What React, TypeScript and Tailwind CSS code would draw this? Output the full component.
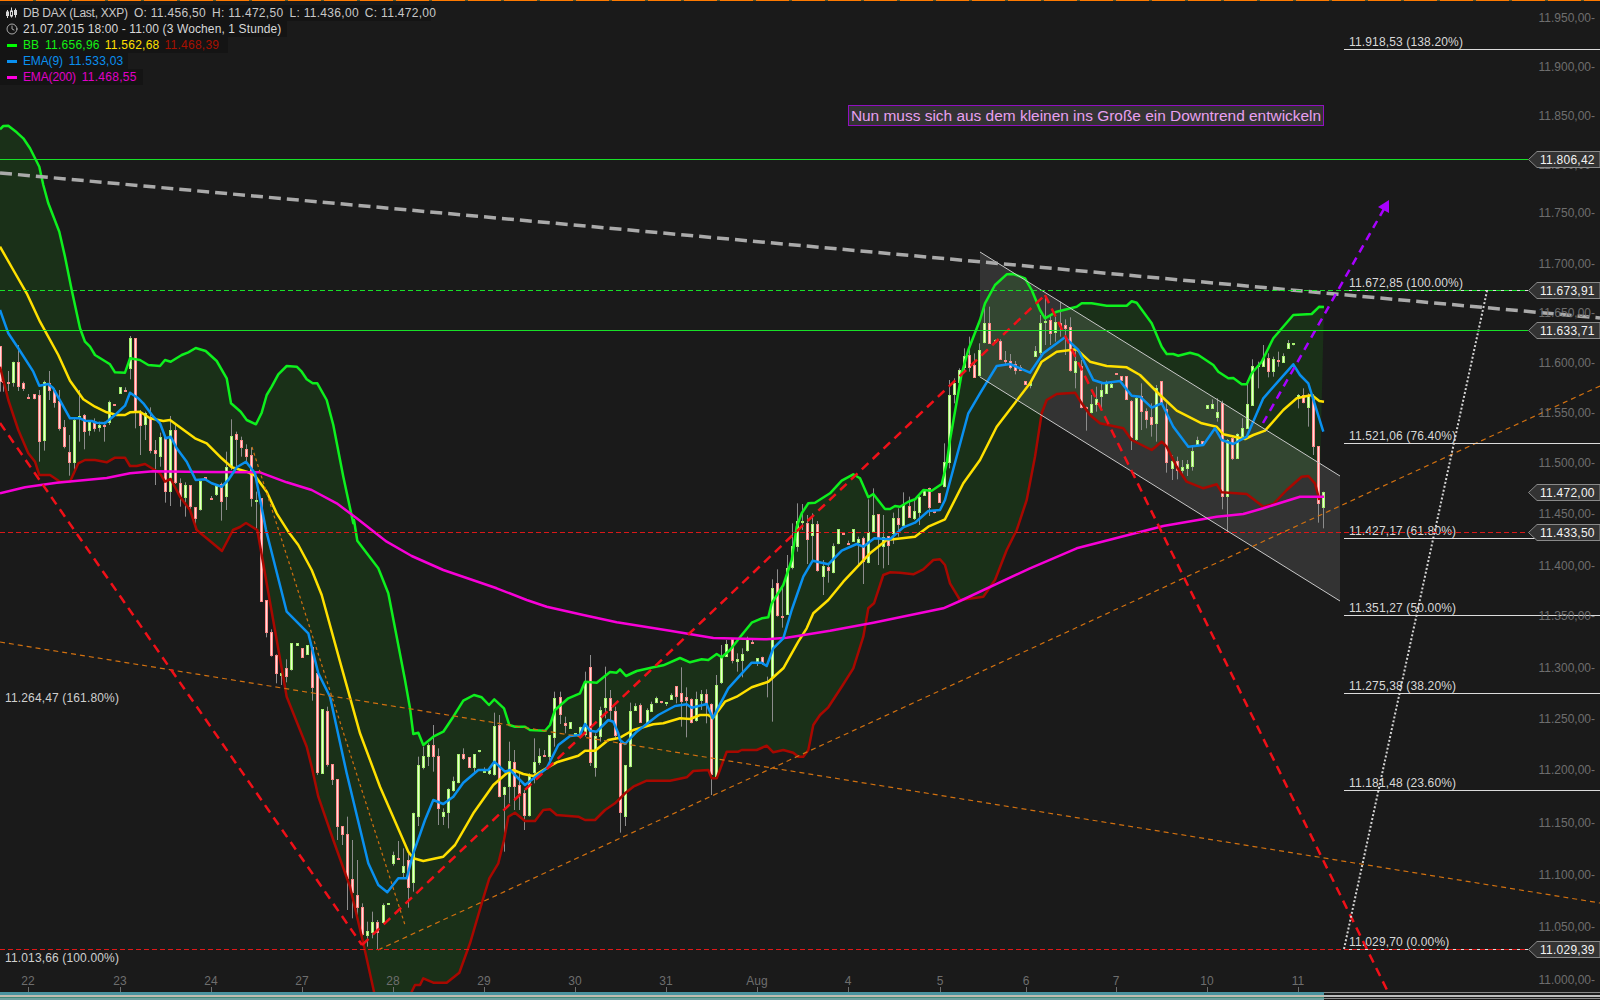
import { Clock } from 'lucide-react';

type Pt = [number, number];
type Candle = [number, number, number, number, number, number];

// readings were taken from 3x crops, so each block carries its crop origin
const crop = (ox: number, oy: number, pts: Pt[]): Pt[] => pts.map(([x, y]) => [ox + x / 3, oy + y / 3]);
const cropCandles = (ox: number, oy: number, rows: Candle[]): Candle[] =>
    rows.map(([x, wt, bt, bb, wb, up]) => [ox + x / 3, oy + wt / 3, oy + bt / 3, oy + bb / 3, oy + wb / 3, up]);

const upperBand: Pt[] = [
    ...crop(0, 110, [[0, 58], [10, 48], [25, 47], [50, 67], [70, 85], [90, 115], [118, 170], [130, 225], [145, 280], [178, 365], [195, 440], [215, 540], [240, 655], [255, 695], [270, 710], [285, 735], [330, 763], [345, 787], [375, 788], [390, 745], [420, 750], [445, 765], [480, 768], [495, 750], [512, 755], [545, 735], [565, 727], [587, 714], [617, 723], [650, 753], [680, 805], [693, 880], [722, 905], [740, 930], [768, 943], [785, 908], [800, 855], [815, 830], [835, 793], [860, 768], [890, 770], [905, 785], [920, 808], [938, 820], [952, 820], [980, 870], [1000, 945], [1030, 1100], [1060, 1240]]),
    ...crop(250, 520, [[312, 0], [322, 62], [385, 145], [415, 220], [440, 350], [465, 480], [480, 565], [490, 642], [505, 638], [520, 675], [550, 650], [580, 635], [610, 590], [640, 542], [672, 525], [695, 532], [717, 555], [733, 538], [762, 565], [778, 615], [795, 620], [825, 620], [840, 630], [885, 632], [900, 615], [915, 570], [955, 535], [990, 520], [1005, 485], [1040, 488], [1080, 456], [1100, 458]]),
    ...crop(620, 440, [[0, 688], [18, 708], [50, 693], [100, 682], [130, 676], [180, 654], [210, 667], [245, 658], [265, 660], [290, 642], [305, 652], [330, 630], [365, 585], [395, 548], [425, 535], [445, 532], [455, 490], [490, 435], [515, 360], [530, 260], [545, 220], [565, 190], [585, 188], [630, 160], [665, 122], [700, 103], [720, 115], [745, 172], [760, 162], [795, 207], [810, 207], [825, 198], [840, 200], [865, 185], [885, 178], [910, 150], [935, 152], [965, 132], [980, 70]]),
    ...crop(900, 240, [[150, 600], [185, 400], [205, 330], [240, 240], [255, 190], [285, 135], [320, 103], [340, 102], [375, 115], [395, 150], [420, 210], [435, 235], [470, 215], [530, 200], [545, 190], [575, 190], [620, 197], [680, 197], [695, 184], [710, 188], [755, 250], [785, 320], [800, 342], [820, 342], [835, 347], [870, 338], [895, 345], [940, 375], [955, 395], [985, 415], [1000, 414], [1025, 433], [1040, 433], [1055, 400], [1085, 365], [1120, 295], [1180, 225], [1235, 222], [1258, 200], [1272, 201]]),
];

const lowerBand: Pt[] = [
    ...crop(0, 110, [[0, 770], [25, 870], [55, 960], [85, 1030], [105, 1055], [118, 1095], [150, 1095], [180, 1115], [210, 1115], [235, 1060], [255, 1050], [285, 1050], [320, 1057], [345, 1043], [375, 1043], [390, 1068], [410, 1068], [435, 1062], [480, 1090], [495, 1115], [512, 1107], [540, 1160], [570, 1200], [590, 1260]]),
    [210, 541], [222, 551], [233, 530], [240, 527], [246, 523],
    ...crop(250, 520, [[22, 30], [110, 530], [170, 680], [185, 740], [205, 830], [250, 960], [300, 1100], [340, 1270], [372, 1415], [372, 1440], [485, 1440], [485, 1415], [495, 1395], [510, 1395], [520, 1375], [550, 1388], [590, 1388], [628, 1358], [660, 1270], [695, 1150], [718, 1075], [745, 1030], [762, 960], [775, 890], [795, 878], [825, 903], [855, 903], [880, 870], [900, 868], [920, 885], [985, 890], [1005, 900], [1035, 900], [1065, 870], [1095, 850]]),
    ...crop(620, 440, [[15, 1060], [40, 1040], [80, 1022], [150, 1022], [200, 1012], [220, 993], [265, 990], [275, 1015], [290, 1015], [320, 935], [355, 935], [365, 930], [410, 930], [440, 917], [460, 937], [490, 930], [520, 938], [535, 950], [550, 950], [565, 930], [580, 855], [600, 825], [625, 802], [665, 740], [700, 685], [730, 590], [745, 505], [762, 490], [790, 405], [810, 397]]),
    ...crop(900, 240, [[0, 998], [40, 1003], [70, 988], [100, 960], [120, 958], [135, 975], [150, 1030], [180, 1080], [250, 1070], [285, 1020], [320, 930], [350, 870], [380, 780], [405, 650], [425, 520], [440, 480], [470, 462], [525, 458], [545, 490], [570, 525], [600, 550], [670, 565], [695, 600], [755, 630], [785, 605], [800, 620], [830, 680], [860, 725], [910, 745], [950, 733], [965, 757], [1040, 762], [1090, 800], [1120, 792], [1160, 750], [1205, 710], [1225, 708], [1245, 730], [1258, 780]]),
];

const midBand: Pt[] = [
    ...crop(0, 110, [[0, 410], [40, 480], [80, 550], [120, 635], [175, 735], [210, 812], [250, 868], [285, 890], [320, 907], [350, 915], [375, 915], [390, 907], [420, 905], [450, 925], [490, 933], [510, 930], [585, 985], [620, 1000], [665, 1045], [695, 1072], [740, 1085], [765, 1097], [800, 1145], [830, 1210]]),
    ...crop(250, 520, [[115, 35], [145, 75], [185, 150], [215, 225], [270, 425], [330, 640], [390, 800], [475, 995], [490, 1015], [520, 1023], [580, 1010], [615, 975], [670, 880], [730, 795], [770, 760], [790, 750], [820, 762], [850, 768], [880, 750], [920, 727], [985, 707], [1005, 692], [1035, 692], [1075, 660]]),
    ...crop(620, 440, [[0, 893], [40, 870], [100, 853], [130, 850], [180, 835], [210, 837], [240, 825], [265, 825], [278, 835], [315, 785], [350, 770], [395, 742], [445, 725], [490, 685], [535, 605], [560, 565], [580, 520], [625, 480], [670, 425], [750, 340], [800, 300], [885, 290], [925, 260], [975, 238]]),
    ...crop(900, 240, [[190, 730], [240, 660], [290, 560], [390, 430], [425, 365], [470, 335], [530, 328], [570, 365], [620, 378], [680, 382], [720, 405], [780, 465], [830, 512], [905, 550], [950, 560], [970, 583], [1035, 597], [1060, 585], [1095, 572], [1150, 510], [1190, 475], [1235, 465], [1258, 483], [1272, 485]]),
];

const ema9: Pt[] = [
    ...crop(0, 110, [[0, 600], [25, 670], [55, 715], [100, 785], [118, 827], [145, 822], [160, 835], [210, 925], [240, 925], [255, 932], [275, 933], [290, 938], [315, 940], [345, 915], [375, 887], [390, 848], [415, 865], [430, 880], [460, 920], [480, 940], [497, 985], [512, 980], [530, 1015], [560, 1055], [587, 1110], [615, 1108], [635, 1120], [665, 1130], [685, 1110], [710, 1072], [738, 1055], [765, 1090]]),
    ...crop(250, 520, [[48, 30], [110, 275], [175, 340], [205, 460], [240, 530], [290, 760], [355, 1030], [385, 1095], [412, 1117], [445, 1075], [470, 1075], [490, 1000], [525, 900], [550, 840], [580, 852], [610, 830], [640, 788], [685, 750], [715, 750], [733, 725], [765, 755], [780, 750], [825, 795], [890, 745], [925, 675], [960, 648], [990, 645], [1005, 612], [1020, 632], [1040, 635], [1075, 600], [1090, 605], [1105, 640]]),
    ...crop(620, 440, [[0, 900], [15, 912], [50, 875], [115, 825], [165, 798], [200, 793], [215, 803], [260, 792], [278, 835], [325, 745], [395, 668], [425, 668], [440, 678], [460, 625], [490, 595], [515, 510], [550, 410], [578, 362], [625, 373], [665, 332], [710, 312], [730, 320], [763, 295], [810, 298], [850, 262], [885, 248], [925, 213], [960, 210], [975, 180]]),
    ...crop(900, 240, [[205, 520], [240, 460], [290, 378], [330, 372], [390, 398], [430, 340], [495, 292], [535, 330], [580, 420], [610, 430], [660, 423], [695, 467], [720, 470], [755, 503], [785, 490], [820, 560], [865, 620], [910, 615], [945, 565], [965, 600], [1000, 612], [1040, 590], [1090, 475], [1180, 373], [1200, 405], [1225, 430], [1270, 575]]),
];

const ema200: Pt[] = [
    ...crop(0, 110, [[0, 1150], [75, 1132], [170, 1118], [320, 1104], [390, 1090], [460, 1084], [610, 1086], [780, 1087], [860, 1117], [935, 1140], [1010, 1180], [1070, 1225]]),
    ...crop(250, 520, [[410, 65], [485, 108], [580, 150], [740, 205], [830, 240], [890, 260], [1000, 285], [1100, 307]]),
    ...crop(620, 440, [[0, 548], [150, 572], [280, 594], [440, 598], [500, 593], [630, 572], [760, 548], [970, 505], [1020, 483]]),
    ...crop(900, 240, [[390, 985], [530, 925], [790, 858], [950, 830], [1030, 822], [1090, 805], [1200, 770], [1272, 770]]),
];

// x, wick top, body top, body bottom, wick bottom, 1 = up
const candles: Candle[] = [
    ...cropCandles(0, 110, [
        [0, 708, 708, 815, 845, 0], [10, 813, 813, 817, 845, 0], [25, 783, 816, 821, 843, 0], [40, 755, 757, 818, 830, 1], [55, 705, 755, 830, 843, 0], [70, 815, 820, 836, 843, 0], [85, 852, 861, 863, 863, 0], [103, 853, 853, 868, 868, 0], [118, 840, 856, 995, 1055, 0], [133, 812, 817, 992, 1022, 1], [148, 783, 820, 842, 870, 0], [163, 835, 840, 880, 893, 0], [178, 840, 873, 957, 962, 0], [193, 930, 952, 1012, 1015, 0], [208, 975, 1027, 1060, 1097, 0], [223, 925, 930, 1060, 1088, 1], [238, 840, 918, 925, 995, 1], [253, 912, 915, 965, 1018, 0], [268, 930, 935, 962, 977, 1], [283, 925, 940, 957, 965, 0], [298, 935, 945, 955, 965, 1], [313, 935, 945, 947, 995, 0], [328, 872, 875, 940, 945, 1], [343, 883, 883, 885, 888, 0], [361, 832, 832, 851, 851, 1], [376, 832, 841, 843, 843, 0], [391, 678, 685, 776, 808, 1], [406, 685, 685, 905, 955, 0], [421, 900, 905, 947, 1035, 0], [436, 905, 908, 945, 990, 1], [451, 892, 920, 1022, 1030, 0], [466, 990, 1020, 1032, 1125, 0], [481, 968, 982, 1040, 1070, 1], [496, 980, 980, 1145, 1178, 0], [511, 918, 960, 1145, 1188, 1], [526, 945, 960, 1118, 1122, 0], [541, 1105, 1120, 1160, 1190, 0], [556, 1117, 1125, 1163, 1220, 1], [571, 1125, 1125, 1190, 1200, 0], [586, 1192, 1192, 1226, 1258, 0], [601, 1112, 1112, 1200, 1202, 1], [616, 1102, 1102, 1104, 1104, 0], [634, 1158, 1164, 1166, 1166, 0], [649, 1125, 1128, 1155, 1158, 1], [664, 1118, 1122, 1175, 1232, 0], [679, 1025, 1070, 1162, 1200, 1], [694, 928, 978, 1072, 1080, 1], [709, 965, 972, 990, 1068, 0], [724, 980, 990, 1015, 1040, 0], [739, 1003, 1018, 1040, 1060, 0], [754, 1012, 1035, 1168, 1190, 0], [769, 1145, 1170, 1175, 1260, 1],
    ]),
    ...cropCandles(250, 520, [
        [34, -66, -66, 245, 245, 0], [49, 240, 240, 338, 352, 0], [64, 328, 337, 407, 410, 0], [79, 403, 405, 462, 490, 0], [94, 432, 460, 468, 495, 1], [109, 418, 445, 470, 487, 0], [124, 370, 370, 450, 452, 1], [142, 370, 370, 377, 377, 1], [157, 385, 385, 413, 413, 0], [172, 375, 375, 405, 405, 1], [187, 380, 380, 505, 542, 0], [202, 445, 460, 760, 765, 0], [217, 568, 568, 762, 762, 1], [232, 560, 573, 735, 740, 0], [247, 733, 733, 780, 795, 0], [262, 778, 778, 922, 960, 0], [277, 918, 918, 945, 975, 0], [292, 890, 942, 1077, 1170, 0], [307, 960, 1078, 1120, 1195, 0], [322, 1020, 1125, 1163, 1190, 0], [337, 1150, 1162, 1245, 1270, 0], [352, 1205, 1233, 1247, 1280, 1], [367, 1175, 1205, 1240, 1255, 1], [382, 1200, 1205, 1240, 1288, 0], [400, 1150, 1155, 1210, 1212, 1], [415, 1150, 1150, 1152, 1152, 1], [430, 995, 1005, 1032, 1037, 1], [445, 963, 1015, 1019, 1020, 0], [460, 985, 1038, 1058, 1075, 1], [475, 1000, 1020, 1105, 1163, 0], [490, 878, 880, 1090, 1115, 1], [505, 710, 736, 890, 918, 1], [520, 680, 708, 744, 748, 1], [535, 670, 675, 710, 738, 1], [550, 615, 675, 710, 755, 0], [565, 685, 708, 868, 915, 0], [580, 865, 876, 890, 915, 1], [595, 805, 808, 878, 925, 1], [610, 770, 784, 812, 815, 1], [625, 702, 702, 788, 790, 1], [640, 685, 702, 716, 720, 0], [658, 712, 712, 743, 743, 0], [673, 703, 703, 743, 758, 1], [688, 690, 690, 697, 697, 1], [703, 742, 752, 758, 758, 1], [718, 745, 750, 761, 765, 1], [733, 578, 618, 765, 767, 1], [748, 585, 615, 830, 832, 0], [763, 800, 802, 825, 995, 1], [778, 665, 723, 800, 850, 1], [793, 690, 727, 800, 870, 0], [808, 760, 795, 822, 870, 0], [823, 810, 820, 888, 930, 0], [838, 760, 767, 888, 890, 1], [853, 655, 727, 760, 790, 1], [868, 685, 708, 730, 735, 1], [883, 690, 705, 709, 709, 0], [898, 645, 645, 712, 740, 1], [913, 515, 535, 653, 680, 1], [931, 515, 530, 585, 612, 0], [946, 590, 610, 617, 640, 0], [961, 606, 606, 627, 627, 1], [976, 640, 640, 648, 648, 1], [991, 620, 622, 650, 655, 1], [1006, 455, 485, 645, 650, 1], [1021, 405, 442, 728, 738, 0], [1036, 640, 647, 743, 770, 1], [1051, 560, 570, 650, 665, 1], [1066, 440, 535, 565, 595, 1], [1081, 510, 535, 572, 600, 0], [1096, 560, 573, 648, 660, 0], [1111, 650, 670, 878, 938, 0], [1126, 736, 736, 890, 918, 1], [1141, 548, 573, 740, 742, 1], [1156, 550, 558, 572, 572, 1], [1171, 550, 556, 608, 608, 0], [1190, 565, 570, 608, 620, 1],
    ]),
    ...cropCandles(620, 440, [
        [94, 785, 792, 815, 815, 1], [109, 770, 775, 790, 790, 1], [124, 783, 783, 790, 790, 0], [139, 786, 786, 791, 798, 1], [154, 760, 766, 780, 780, 1], [169, 738, 738, 770, 790, 0], [184, 682, 760, 785, 860, 0], [199, 742, 771, 782, 892, 0], [214, 775, 778, 848, 850, 0], [229, 755, 778, 842, 845, 1], [244, 750, 762, 782, 810, 1], [259, 748, 762, 795, 850, 0], [274, 790, 793, 1005, 1065, 0], [289, 705, 736, 1010, 1015, 1], [304, 615, 650, 730, 732, 1], [319, 600, 612, 650, 650, 1], [337, 595, 598, 662, 670, 0], [352, 640, 658, 665, 695, 1], [367, 625, 643, 662, 712, 1], [382, 590, 598, 632, 635, 1], [397, 596, 606, 611, 611, 0], [412, 655, 655, 665, 678, 1], [427, 650, 650, 670, 675, 0], [442, 710, 722, 730, 772, 1], [457, 418, 445, 715, 845, 1], [472, 388, 430, 528, 530, 0], [487, 435, 528, 530, 563, 0], [502, 345, 385, 525, 525, 1], [517, 250, 318, 385, 388, 1], [532, 190, 243, 322, 335, 1], [547, 192, 243, 248, 270, 1], [562, 225, 248, 300, 372, 0], [577, 220, 252, 288, 360, 1], [592, 243, 252, 392, 395, 0], [610, 360, 378, 410, 465, 1], [625, 370, 381, 393, 428, 0], [640, 310, 318, 398, 400, 1], [655, 268, 268, 313, 313, 1], [670, 279, 279, 282, 285, 0], [685, 302, 308, 311, 311, 0], [700, 268, 268, 305, 305, 1], [715, 290, 298, 310, 372, 1], [730, 290, 295, 365, 432, 0], [745, 178, 277, 368, 370, 1], [760, 145, 226, 276, 278, 1], [775, 222, 223, 295, 375, 0], [790, 225, 290, 320, 385, 1], [805, 288, 288, 318, 375, 0], [820, 218, 235, 282, 312, 1], [835, 205, 235, 255, 290, 0], [850, 157, 195, 258, 260, 1], [868, 170, 198, 233, 233, 0], [883, 180, 213, 238, 240, 1], [898, 168, 170, 220, 255, 1], [913, 150, 150, 167, 167, 1], [928, 143, 145, 203, 228, 0], [943, 213, 213, 220, 220, 0], [958, 160, 160, 189, 189, 0], [973, 10, 67, 140, 142, 1],
    ]),
    ...cropCandles(900, 240, [
        [148, 420, 465, 668, 685, 1], [163, 415, 430, 465, 490, 1], [178, 385, 390, 428, 440, 1], [193, 325, 348, 385, 395, 1], [208, 290, 345, 383, 395, 0], [223, 340, 375, 413, 413, 0], [238, 310, 330, 408, 410, 1], [253, 195, 248, 310, 310, 1], [268, 200, 250, 312, 312, 0], [286, 298, 301, 308, 308, 1], [301, 298, 303, 360, 360, 0], [316, 333, 360, 363, 375, 0], [331, 342, 364, 384, 388, 0], [346, 363, 372, 393, 403, 0], [361, 375, 381, 392, 392, 0], [376, 423, 423, 435, 435, 0], [391, 425, 425, 437, 445, 1], [406, 318, 333, 350, 350, 1], [421, 225, 250, 340, 345, 1], [436, 165, 243, 250, 315, 1], [451, 225, 240, 282, 315, 0], [466, 230, 246, 280, 305, 1], [481, 185, 250, 260, 290, 0], [496, 238, 255, 268, 345, 0], [511, 232, 262, 392, 395, 0], [526, 320, 363, 398, 445, 1], [544, 360, 378, 503, 505, 0], [559, 500, 500, 505, 572, 0], [574, 465, 492, 518, 520, 1], [589, 440, 478, 495, 515, 1], [604, 430, 450, 470, 505, 1], [619, 422, 433, 462, 462, 1], [634, 425, 433, 443, 443, 1], [649, 400, 400, 402, 405, 0], [664, 408, 408, 423, 423, 0], [679, 408, 408, 480, 480, 0], [694, 480, 484, 595, 630, 0], [709, 470, 474, 600, 602, 1], [724, 430, 468, 515, 570, 0], [739, 505, 514, 540, 565, 0], [754, 490, 532, 555, 590, 0], [769, 435, 445, 552, 605, 1], [784, 424, 424, 490, 490, 0], [799, 490, 507, 670, 698, 0], [817, 645, 663, 687, 720, 1], [832, 650, 663, 693, 718, 0], [847, 660, 681, 692, 708, 1], [862, 660, 672, 687, 708, 1], [877, 620, 633, 680, 692, 1], [892, 590, 600, 615, 615, 1], [907, 603, 603, 615, 615, 0], [922, 496, 496, 506, 506, 1], [937, 478, 492, 506, 506, 1], [952, 475, 516, 535, 545, 1], [967, 482, 490, 770, 808, 0], [982, 597, 600, 770, 875, 1], [997, 590, 595, 656, 660, 0], [1012, 580, 583, 656, 656, 1], [1027, 535, 565, 590, 590, 1], [1042, 420, 492, 567, 567, 1], [1057, 358, 378, 497, 497, 1], [1075, 365, 375, 380, 445, 1], [1090, 315, 355, 380, 380, 1], [1105, 340, 355, 395, 412, 0], [1120, 350, 358, 396, 410, 1], [1135, 335, 361, 366, 380, 0], [1150, 340, 348, 368, 368, 1], [1165, 300, 310, 326, 326, 1], [1180, 310, 310, 316, 316, 1], [1195, 462, 465, 478, 505, 1], [1210, 445, 465, 490, 490, 0], [1225, 460, 465, 503, 560, 1], [1240, 462, 478, 620, 645, 0], [1255, 618, 618, 793, 848, 0], [1270, 755, 757, 805, 865, 1],
    ]),
];

const axisLabels: [string, number][] = [
    ['11.950,00-', 18], ['11.900,00-', 67], ['11.850,00-', 116], ['11.800,00-', 165], ['11.750,00-', 213], ['11.700,00-', 264], ['11.650,00-', 313], ['11.600,00-', 363], ['11.550,00-', 413], ['11.500,00-', 463], ['11.450,00-', 514], ['11.400,00-', 566], ['11.350,00-', 616], ['11.300,00-', 668], ['11.250,00-', 719], ['11.200,00-', 770], ['11.150,00-', 823], ['11.100,00-', 875], ['11.050,00-', 927], ['11.000,00-', 980],
];
const dayLabels: [string, number][] = [
    ['22', 28], ['23', 120], ['24', 211], ['27', 302], ['28', 393], ['29', 484], ['30', 575], ['31', 666], ['Aug', 757], ['4', 848], ['5', 940], ['6', 1026], ['7', 1116], ['10', 1207], ['11', 1298],
];
const fibLevels: [string, number][] = [
    ['11.918,53 (138.20%)', 49.5], ['11.672,85 (100.00%)', 290.5], ['11.521,06 (76.40%)', 443.5], ['11.427,17 (61.80%)', 538.5], ['11.351,27 (50.00%)', 615.5], ['11.275,38 (38.20%)', 693.5], ['11.181,48 (23.60%)', 790.5], ['11.029,70 (0.00%)', 949.5],
];
const priceTags: [string, number][] = [
    ['11.806,42', 159.5], ['11.673,91', 290.5], ['11.633,71', 330.5], ['11.472,00', 492.5], ['11.433,50', 532.5], ['11.029,39', 949.5],
];

const toPoints = (pts: Pt[]) => pts.map(([x, y]) => `${x.toFixed(1)},${y.toFixed(1)}`).join(' ');

function CandleMark({ c }: { c: Candle }) {
    const [x, wt, bt, bb, wb, up] = c;
    const px = Math.round(x);
    const top = Math.round(bt);
    const h = Math.max(Math.round(bb) - top, 2);
    return (
        <g>
            <line x1={px + 0.5} x2={px + 0.5} y1={wt} y2={wb} stroke="#8c8c8c" strokeWidth={1} />
            <rect x={px - 1} y={top} width={3} height={h} fill={up ? '#a6f070' : '#ff8a8a'} />
            <rect x={px} y={top + 1} width={1} height={Math.max(h - 2, 0)} fill={up ? '#eaffd2' : '#ffdcdc'} />
        </g>
    );
}

function LegendIcon() {
    return (
        <svg width="12" height="12" viewBox="0 0 12 12" fill="none" stroke="#d8d8d8" strokeWidth="1" className="shrink-0">
            <path d="M1.5 3v8M5.5 0.5v10M9.5 1.5v9" />
            <rect x="0.5" y="5" width="2" height="3.5" fill="#d8d8d8" />
            <rect x="4.5" y="4" width="2" height="5" fill="#1a1a1a" />
            <rect x="8.5" y="3.5" width="2" height="4" fill="#d8d8d8" />
        </svg>
    );
}

export default function App() {
    return (
        <div className="h-screen w-full flex flex-col overflow-hidden bg-[#1a1a1a] font-['Liberation_Sans',sans-serif]">
            <div className="h-px shrink-0 bg-[repeating-linear-gradient(90deg,#ff7a00_0_33px,#55552a_33px_36px)]" />

            <div className="relative h-[991px] shrink-0">
                <svg width="1600" height="991" viewBox="0 1 1600 991" className="block text-[12px]">
                    {/* Bollinger fill */}
                    <polygon points={toPoints([...upperBand, ...[...lowerBand].reverse()])} fill="#1a3018" />
                    {/* channel */}
                    <polygon points="980,252 1340,476 1340,601 980,377" fill="#ffffff" fillOpacity="0.11" />

                    {candles.map((c, i) => <CandleMark key={i} c={c} />)}

                    <polyline points={toPoints(lowerBand)} fill="none" stroke="#a80800" strokeWidth="2.5" strokeLinejoin="round" />
                    <polyline points={toPoints(upperBand)} fill="none" stroke="#0ef01e" strokeWidth="2.5" strokeLinejoin="round" />
                    <polyline points={toPoints(midBand)} fill="none" stroke="#ffe000" strokeWidth="2.5" strokeLinejoin="round" />
                    <polyline points={toPoints(ema200)} fill="none" stroke="#f800d8" strokeWidth="2.5" strokeLinejoin="round" />
                    <polyline points={toPoints(ema9)} fill="none" stroke="#0a90f0" strokeWidth="2.5" strokeLinejoin="round" />

                    {/* trend lines */}
                    <line x1="980" y1="252" x2="1340" y2="476" stroke="#c8c8c8" />
                    <line x1="980" y1="377" x2="1340" y2="601" stroke="#c8c8c8" />
                    <line x1="0" y1="642" x2="1600" y2="903" stroke="#d07010" strokeWidth="1.2" strokeDasharray="5 4" />
                    <line x1="378" y1="950" x2="1600" y2="386" stroke="#d07010" strokeWidth="1.2" strokeDasharray="5 4" />
                    <line x1="252" y1="447" x2="405" y2="925" stroke="#d07010" strokeWidth="1.2" strokeDasharray="3 3" />
                    <line x1="0" y1="423" x2="362" y2="945" stroke="#f01018" strokeWidth="2.5" strokeDasharray="9 6" />
                    <line x1="362" y1="945" x2="1045" y2="295" stroke="#f01018" strokeWidth="2.5" strokeDasharray="9 6" />
                    <line x1="1045" y1="295" x2="1388" y2="992" stroke="#f01018" strokeWidth="2.5" strokeDasharray="9 6" />
                    <line x1="0" y1="173" x2="1600" y2="318" stroke="#aaaaaa" strokeWidth="3.5" strokeDasharray="12 6" />
                    <line x1="1263" y1="423" x2="1385" y2="207" stroke="#a800ff" strokeWidth="2.5" strokeDasharray="8 6" />
                    <polygon points="1389,200 1378,207 1389,213" fill="#a800ff" />
                    <line x1="1344" y1="949" x2="1487" y2="291" stroke="#d4d4d4" strokeWidth="2" strokeDasharray="2 2" />

                    {/* fibonacci levels */}
                    {fibLevels.map(([label, y]) => (
                        <g key={label}>
                            <line x1="1344" x2={y === 290.5 ? 1528 : y === 949.5 ? 1528 : 1600} y1={y} y2={y} stroke="#dcdcdc" />
                            <text x="1349" y={y - 3.5} className="fill-[#d8d8d8] tracking-[0.15px]">{label}</text>
                        </g>
                    ))}
                    <text x="5" y="702" className="fill-[#d0d0d0] tracking-[0.15px]">11.264,47 (161.80%)</text>
                    <text x="5" y="962" className="fill-[#d0d0d0] tracking-[0.15px]">11.013,66 (100.00%)</text>

                    {/* horizontal levels */}
                    <line x1="0" x2="1528" y1="159.5" y2="159.5" stroke="#18e028" />
                    <line x1="0" x2="1528" y1="330.5" y2="330.5" stroke="#18e028" />
                    <line x1="0" x2="1528" y1="290.5" y2="290.5" stroke="#18e028" strokeDasharray="5 3" />
                    <line x1="0" x2="1528" y1="532.5" y2="532.5" stroke="#d81818" strokeDasharray="5 3" />
                    <line x1="0" x2="1528" y1="949.5" y2="949.5" stroke="#e01818" strokeDasharray="5 3" />

                    {/* price axis */}
                    {axisLabels.map(([label, y]) => (
                        <text key={label} x="1595" y={y + 4} textAnchor="end" className="fill-[#6e6e6e]">{label}</text>
                    ))}
                    {priceTags.map(([label, y]) => (
                        <g key={label}>
                            <path d={`M1528.5 ${y} L1537 ${y - 8} H1600 V${y + 8} H1537 Z`} fill="#333333" stroke="#8a8a8a" />
                            <text x="1540" y={y + 4} className="fill-[#f2f2f2] tracking-[0.25px]">{label}</text>
                        </g>
                    ))}

                    {/* time axis */}
                    {dayLabels.map(([label, x]) => (
                        <g key={label}>
                            <text x={x} y="985" textAnchor="middle" className="fill-[#6e6e6e]">{label}</text>
                            <line x1={x + 0.5} x2={x + 0.5} y1="987" y2="992" stroke="#6e6e6e" />
                        </g>
                    ))}
                </svg>

                {/* legend */}
                <div className="absolute left-0 top-[4px] flex flex-col items-start text-[12px] leading-4 whitespace-nowrap">
                    <div className="h-4 w-[431px] pl-[6px] flex items-center gap-[5px] bg-[#141414] text-[#c8c8c8]">
                        <LegendIcon />
                        <span className="flex gap-[6px]">
                            <span className="tracking-[-0.25px]">DB DAX (Last, XXP)</span>
                            <span className="tracking-[0.3px]">O: 11.456,50</span>
                            <span className="tracking-[0.3px]">H: 11.472,50</span>
                            <span className="tracking-[0.3px]">L: 11.436,00</span>
                            <span className="tracking-[0.3px]">C: 11.472,00</span>
                        </span>
                    </div>
                    <div className="h-4 w-[287px] pl-[6px] flex items-center gap-[5px] bg-[#141414] text-[#d8d8d8]">
                        <Clock size={12} strokeWidth={1.5} />
                        <span className="tracking-[0.12px]">21.07.2015 18:00 - 11:00 (3 Wochen, 1 Stunde)</span>
                    </div>
                    <div className="h-4 w-[228px] pl-[7px] flex items-center bg-[#141414]">
                        <span className="w-[10px] h-[3px] mr-[6px] bg-[#00ff00]" />
                        <span className="text-[#14f014] mr-[6px]">BB</span>
                        <span className="text-[#14f014] mr-[5px] tracking-[0.25px]">11.656,96</span>
                        <span className="text-[#ffe000] mr-[5px] tracking-[0.25px]">11.562,68</span>
                        <span className="text-[#a81000] tracking-[0.25px]">11.468,39</span>
                    </div>
                    <div className="h-4 w-[128px] pl-[7px] flex items-center bg-[#141414] text-[#0a90f0]">
                        <span className="w-[10px] h-[3px] mr-[6px] bg-[#0a90f0]" />
                        <span className="mr-[6px] tracking-[-0.15px]">EMA(9)</span>
                        <span className="tracking-[0.25px]">11.533,03</span>
                    </div>
                    <div className="h-4 w-[143px] pl-[7px] flex items-center bg-[#141414] text-[#e000c8]">
                        <span className="w-[10px] h-[3px] mr-[6px] bg-[#ff00e0]" />
                        <span className="mr-[6px] tracking-[-0.15px]">EMA(200)</span>
                        <span className="tracking-[0.25px]">11.468,55</span>
                    </div>
                </div>

                {/* annotation */}
                <div className="absolute left-[848px] top-[104px] h-[21px] w-[476px] flex items-center justify-center border border-[#9010c0] bg-[#333333] text-[15.45px] text-[#e8a0f0] whitespace-nowrap">
                    Nun muss sich aus dem kleinen ins Große ein Downtrend entwickeln
                </div>
            </div>

            {/* navigator strip */}
            <div className="h-[8px] shrink-0 flex">
                <div className="w-[1324px] flex flex-col">
                    <div className="h-[3px] bg-[#4a93a0]" />
                    <div className="h-[2px] bg-[#c0bcb0]" />
                    <div className="h-px bg-[#3f8878]" />
                    <div className="h-[2px] bg-[#6fa0a0]" />
                </div>
                <div className="flex-1 flex flex-col">
                    <div className="h-px bg-[#8a8a8a]" />
                    <div className="h-[2px]" />
                    <div className="h-[2px] bg-[#bcbcbc]" />
                    <div className="h-px" />
                    <div className="h-px bg-[#8a8a8a]" />
                </div>
            </div>
        </div>
    );
}
